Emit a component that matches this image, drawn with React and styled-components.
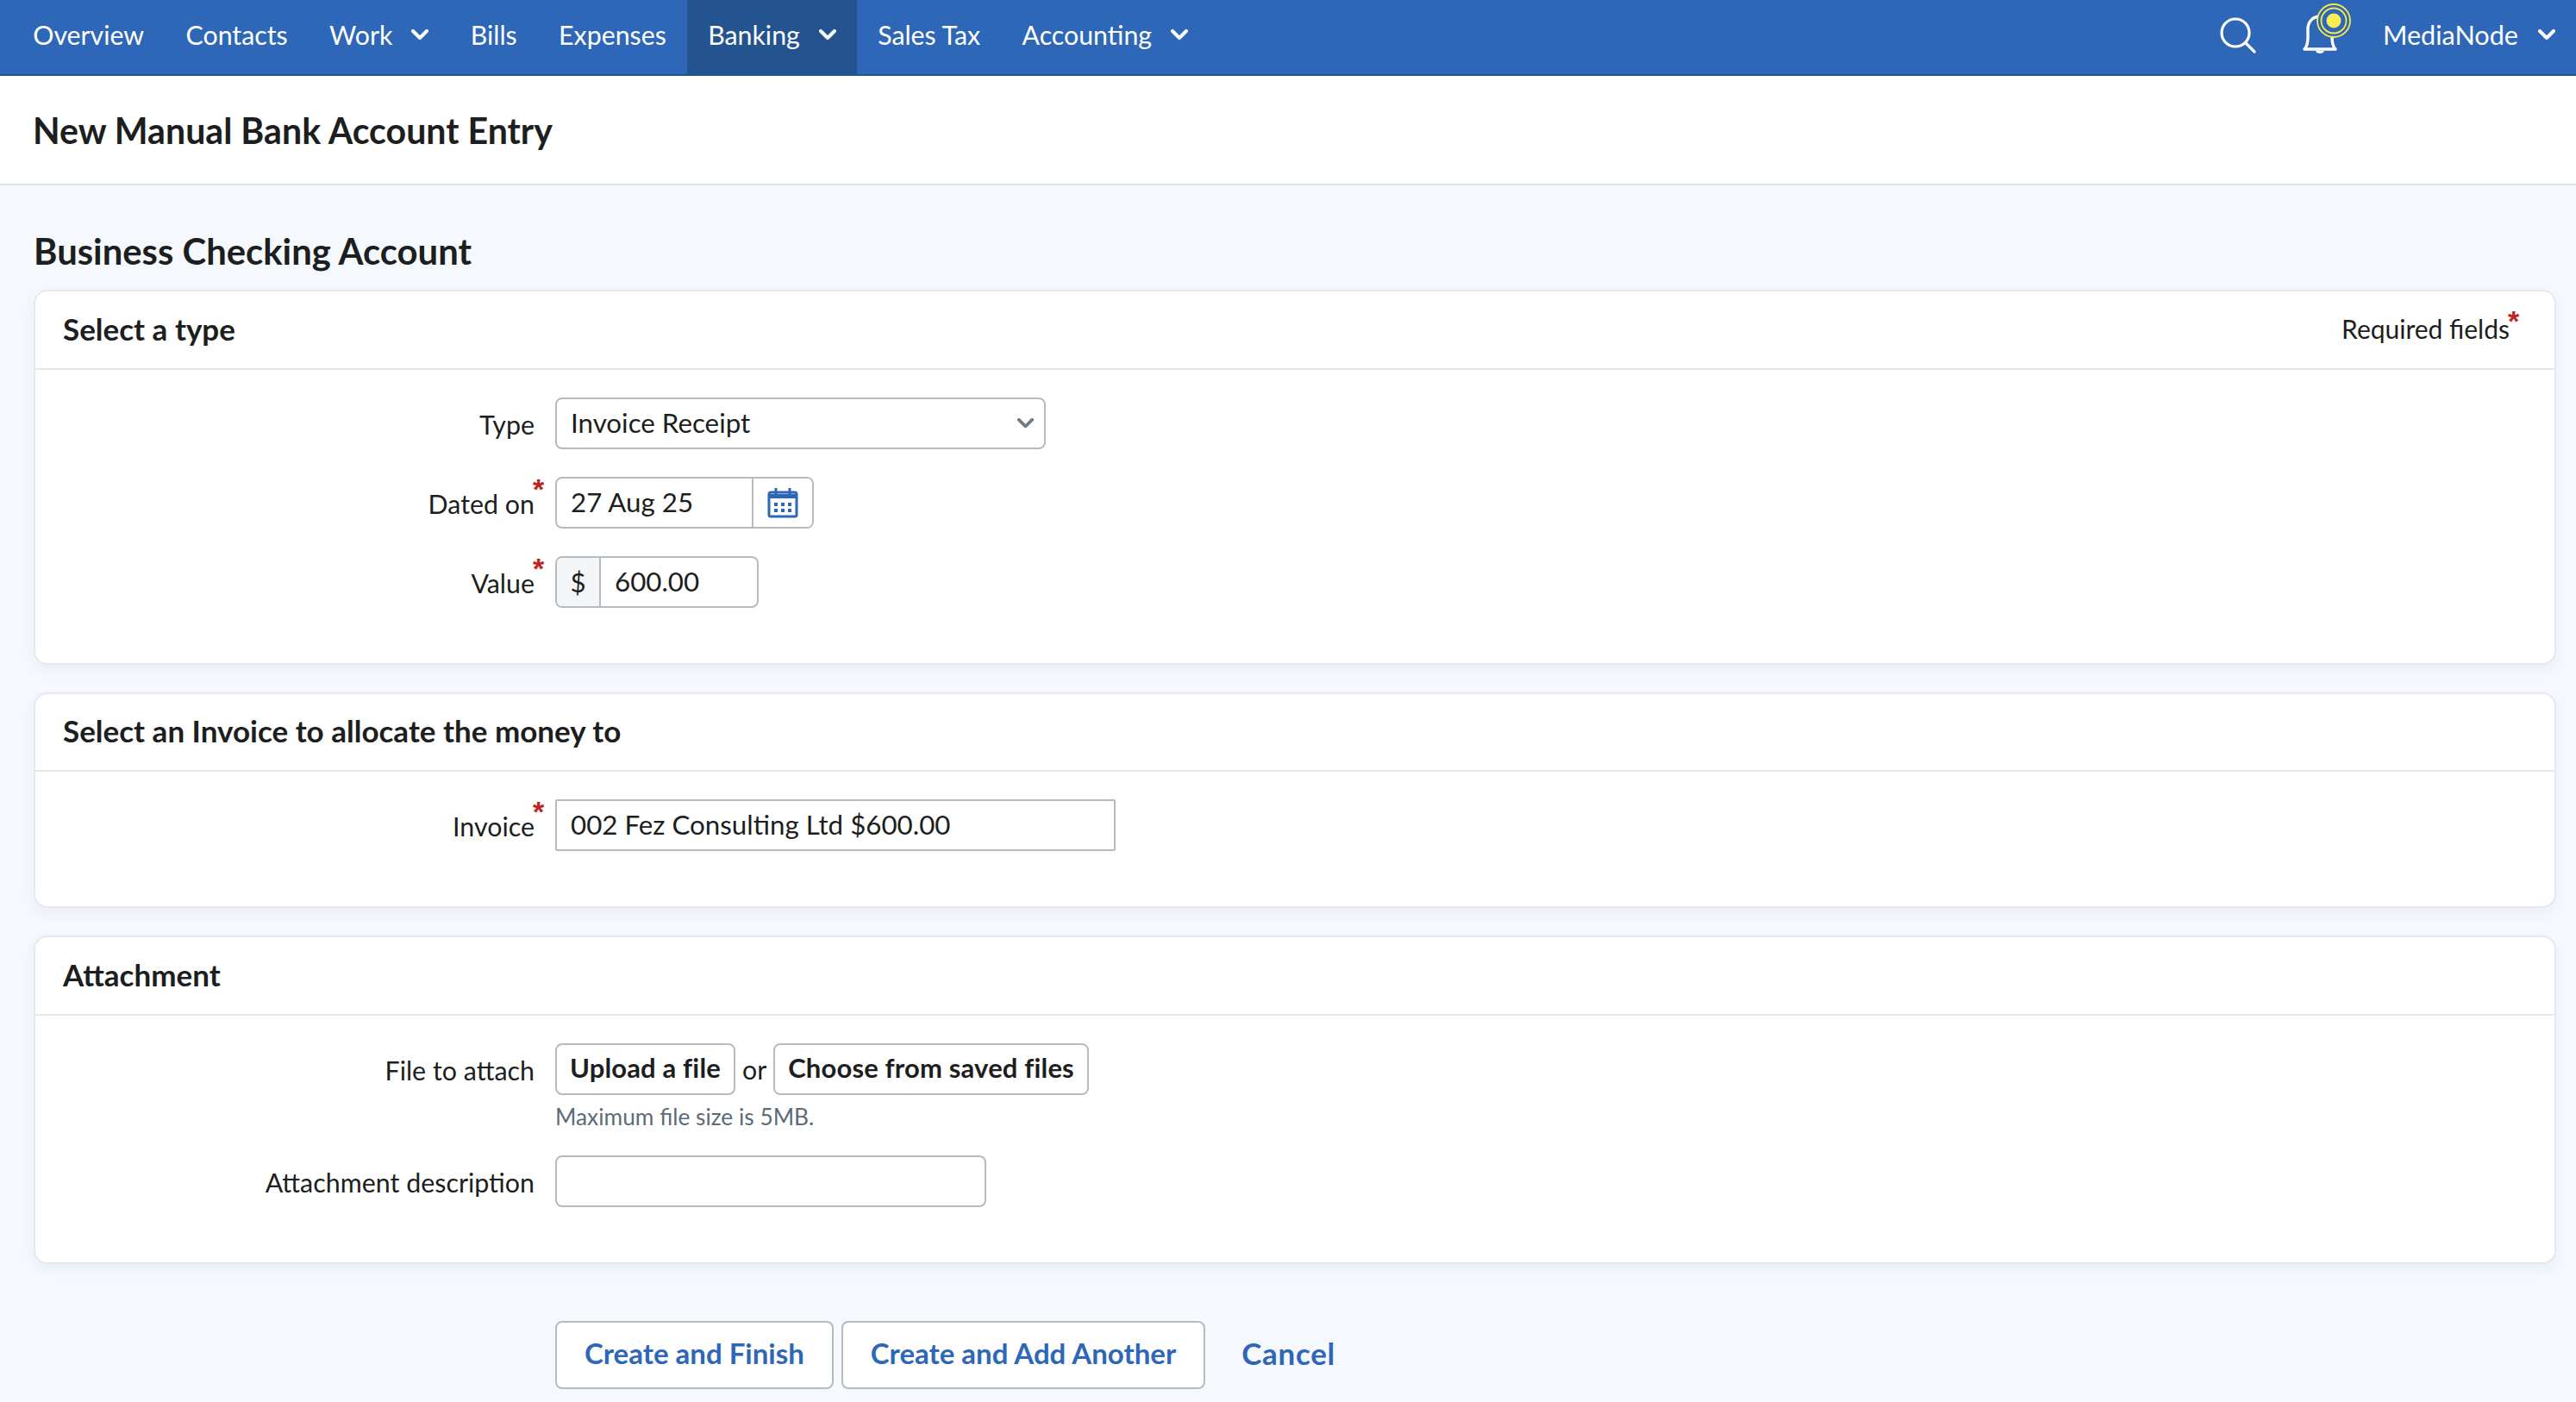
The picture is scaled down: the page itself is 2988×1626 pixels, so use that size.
import React from 'react'
import styled, { createGlobalStyle } from 'styled-components'

const GlobalStyle = createGlobalStyle`
    html, body {
        margin: 0;
        padding: 0;
        background: #f5f8fd;
    }
    body {
        font-family: Lato, "Noto Sans", sans-serif;
        color: #1c1e20;
    }
    * {
        box-sizing: border-box;
    }
`

const Page = styled.div`
    width: 2988px;
    height: 1626px;
    overflow: hidden;
`

const TopNav = styled.nav`
    display: flex;
    align-items: stretch;
    height: 88px;
    padding: 0 24px 0 14px;
    background: #2e67b8;
    border-bottom: 2px solid #23548f;
`

const NavItem = styled.a`
    display: flex;
    align-items: center;
    gap: 22px;
    padding: 0 24.2px 6px;
    color: #fff;
    font-size: 30.3px;
    background: ${props => (props.$active ? '#23548f' : 'transparent')};
`

const NavRight = styled.div`
    display: flex;
    align-items: center;
    margin-left: auto;
`

const IconSlot = styled.span`
    display: flex;
    margin-right: ${props => props.$gap}px;
    margin-bottom: ${props => props.$lift || 0}px;
`

const UserMenu = styled.a`
    display: flex;
    align-items: center;
    gap: 23px;
    padding-bottom: 6px;
    color: #fff;
    font-size: 30.6px;
`

const TitleBar = styled.header`
    display: flex;
    align-items: center;
    height: 127px;
    padding: 0 38px;
    background: #fff;
    border-bottom: 2px solid #e3e5ec;
`

const Title = styled.h1`
    margin: 0;
    font-size: 41.1px;
    font-weight: 700;
`

const Main = styled.main`
    padding: 0 23px 0 39px;
`

const AccountName = styled.h2`
    display: flex;
    align-items: center;
    height: 121px;
    margin: 0;
    padding-top: 31px;
    font-size: 41.8px;
    font-weight: 700;
`

const Card = styled.section`
    margin-bottom: 32px;
    background: #fff;
    border: 2px solid #e6e8ee;
    border-radius: 16px;
    box-shadow: 0 6px 14px rgba(90, 120, 190, 0.07);
`

const CardHead = styled.div`
    display: flex;
    align-items: center;
    justify-content: space-between;
    height: 90.5px;
    padding: 0 52px 3px 32px;
    border-bottom: 2px solid #e6e8ee;
`

const CardTitle = styled.h3`
    margin: 0;
    font-size: 35px;
    font-weight: 700;
`

const Required = styled.span`
    position: relative;
    font-size: 30px;
`

const Star = styled.span`
    position: absolute;
    top: ${props => props.$top}px;
    left: calc(100% - 2px);
    color: #c0241f;
    font-family: "Liberation Sans", sans-serif;
    font-size: 34px;
    font-weight: 700;
    line-height: 1;
`

const CardBody = styled.div`
    display: flex;
    flex-direction: column;
    gap: 32px;
    padding: 32px 0 64px;
`

const Row = styled.div`
    display: flex;
    align-items: flex-start;
    gap: 24px;
`

const LabelCell = styled.div`
    flex: none;
    width: 579px;
    padding-top: 12px;
    line-height: 38px;
    text-align: right;
`

const Label = styled.label`
    position: relative;
    font-size: 30.4px;
`

const Controls = styled.div`
    display: flex;
    flex-direction: column;
    gap: 12px;
`

const Field = styled.div`
    display: flex;
    align-items: center;
    width: ${props => props.$width}px;
    height: 60px;
    font-size: 31.3px;
    background: #fff;
    border: 2px solid #b4bcc2;
    border-radius: ${props => (props.$square ? 2 : 8)}px;
    overflow: hidden;
`

const FieldText = styled.span`
    flex: 1;
    padding: 0 16px 2px;
`

const Addon = styled.span`
    display: flex;
    flex: none;
    align-items: center;
    justify-content: center;
    align-self: stretch;
    width: ${props => props.$width}px;
    background: ${props => props.$tint || '#fff'};
    border-${props => props.$side}: 2px solid #b4bcc2;
`

const Chevron = styled.svg`
    flex: none;
    margin-right: ${props => props.$right || 0}px;
`

const Inline = styled.div`
    display: flex;
    align-items: center;
    gap: 8px;
    font-size: 30.3px;
`

const FileButton = styled.button`
    height: 60px;
    padding: 0 15px 3px;
    color: #1c1e20;
    font: 700 31px Lato, sans-serif;
    letter-spacing: 0.15px;
    background: #fff;
    border: 2px solid #b4bcc2;
    border-radius: 8px;
`

const Hint = styled.div`
    color: #5c6b78;
    font-size: 26.3px;
    line-height: 26px;
`

const Actions = styled.div`
    display: flex;
    align-items: center;
    padding: 34px 0 0 605px;
`

const ActionButton = styled.button`
    height: 79px;
    margin-right: 9px;
    padding: 0 32px 4px;
    color: #2e67b8;
    font: 700 33px Lato, sans-serif;
    background: #fff;
    border: 2px solid #b4bcc2;
    border-radius: 8px;
`

const CancelLink = styled.a`
    margin-left: 33px;
    padding-bottom: 4px;
    color: #2e67b8;
    font-size: 35px;
    font-weight: 700;
    letter-spacing: 0.7px;
`

const Caret = ({ color = '#fff', size = 20, width = 4, right }) => (
    <Chevron $right={right} width={size} height={size * 0.62} viewBox="0 0 20 12.4" fill="none">
        <path d="M2 2l8 8 8-8" stroke={color} strokeWidth={width} strokeLinecap="round" strokeLinejoin="round" />
    </Chevron>
)

const SearchIcon = () => (
    <svg width="42" height="42" viewBox="0 0 42 42" fill="none" stroke="#fff" strokeWidth="3.2" strokeLinecap="round">
        <circle cx="18" cy="18" r="16" />
        <path d="M30 30l10 10" />
    </svg>
)

const BellIcon = () => (
    <svg width="58" height="84" viewBox="0 0 58 84" fill="none">
        <path
            d="M4 56c3-3 4-7 4-14V33c0-9 6-15 14-15s14 6 14 15v9c0 7 1 11 4 14H4z"
            stroke="#fff"
            strokeWidth="3.4"
            strokeLinejoin="round"
        />
        <path d="M17 58c1 4 9 4 10 0z" fill="#fff" />
        <circle cx="38" cy="23" r="19" fill="#2e67b8" stroke="#f7e94c" strokeWidth="1.8" />
        <circle cx="38" cy="23" r="14.5" fill="none" stroke="#f7e94c" strokeWidth="1.8" />
        <circle cx="38" cy="23" r="8.5" fill="#f9ec55" />
    </svg>
)

const CalendarIcon = () => (
    <svg width="36" height="36" viewBox="0 0 36 36" fill="none">
        <rect x="2" y="6" width="32" height="28" rx="2" stroke="#2e67b8" strokeWidth="3" />
        <path d="M2 8h32v5H2z" fill="#2e67b8" />
        <path d="M10 1v8M26 1v8" stroke="#2e67b8" strokeWidth="3" />
        <path d="M8 18h4v4H8zM16 18h4v4h-4zM24 18h4v4h-4zM8 25h4v4H8zM16 25h4v4h-4zM24 25h4v4h-4z" fill="#2e67b8" />
    </svg>
)

const navItems = [
    { name: 'Overview' },
    { name: 'Contacts' },
    { name: 'Work', caret: true },
    { name: 'Bills' },
    { name: 'Expenses' },
    { name: 'Banking', caret: true, active: true },
    { name: 'Sales Tax' },
    { name: 'Accounting', caret: true }
]

const FormRow = ({ label, required, children }) => (
    <Row>
        <LabelCell>
            <Label>
                {label}
                {required && <Star $top={-16}>*</Star>}
            </Label>
        </LabelCell>
        <Controls>{children}</Controls>
    </Row>
)

export default function App() {
    return (
        <Page>
            <GlobalStyle />
            <TopNav>
                {navItems.map(item => (
                    <NavItem key={item.name} $active={item.active}>
                        {item.name}
                        {item.caret && <Caret />}
                    </NavItem>
                ))}
                <NavRight>
                    <IconSlot $gap={52} $lift={4}>
                        <SearchIcon />
                    </IconSlot>
                    <IconSlot $gap={37}>
                        <BellIcon />
                    </IconSlot>
                    <UserMenu>
                        MediaNode
                        <Caret />
                    </UserMenu>
                </NavRight>
            </TopNav>
            <TitleBar>
                <Title>New Manual Bank Account Entry</Title>
            </TitleBar>
            <Main>
                <AccountName>Business Checking Account</AccountName>
                <Card>
                    <CardHead>
                        <CardTitle>Select a type</CardTitle>
                        <Required>
                            Required fields<Star $top={-8}>*</Star>
                        </Required>
                    </CardHead>
                    <CardBody>
                        <FormRow label="Type">
                            <Field $width={569}>
                                <FieldText>Invoice Receipt</FieldText>
                                <Caret color="#6f7c85" size={19} right={12} />
                            </Field>
                        </FormRow>
                        <FormRow label="Dated on" required>
                            <Field $width={300}>
                                <FieldText>27 Aug 25</FieldText>
                                <Addon $width={70} $side="left">
                                    <CalendarIcon />
                                </Addon>
                            </Field>
                        </FormRow>
                        <FormRow label="Value" required>
                            <Field $width={236}>
                                <Addon $width={51} $side="right" $tint="#f4f5f7">
                                    $
                                </Addon>
                                <FieldText>600.00</FieldText>
                            </Field>
                        </FormRow>
                    </CardBody>
                </Card>
                <Card>
                    <CardHead>
                        <CardTitle>Select an Invoice to allocate the money to</CardTitle>
                    </CardHead>
                    <CardBody>
                        <FormRow label="Invoice" required>
                            <Field $width={650} $square>
                                <FieldText>002 Fez Consulting Ltd $600.00</FieldText>
                            </Field>
                        </FormRow>
                    </CardBody>
                </Card>
                <Card>
                    <CardHead>
                        <CardTitle>Attachment</CardTitle>
                    </CardHead>
                    <CardBody>
                        <FormRow label="File to attach">
                            <Inline>
                                <FileButton>Upload a file</FileButton>
                                or
                                <FileButton>Choose from saved files</FileButton>
                            </Inline>
                            <Hint>Maximum file size is 5MB.</Hint>
                        </FormRow>
                        <FormRow label="Attachment description">
                            <Field $width={500} />
                        </FormRow>
                    </CardBody>
                </Card>
                <Actions>
                    <ActionButton>Create and Finish</ActionButton>
                    <ActionButton>Create and Add Another</ActionButton>
                    <CancelLink>Cancel</CancelLink>
                </Actions>
            </Main>
        </Page>
    )
}
